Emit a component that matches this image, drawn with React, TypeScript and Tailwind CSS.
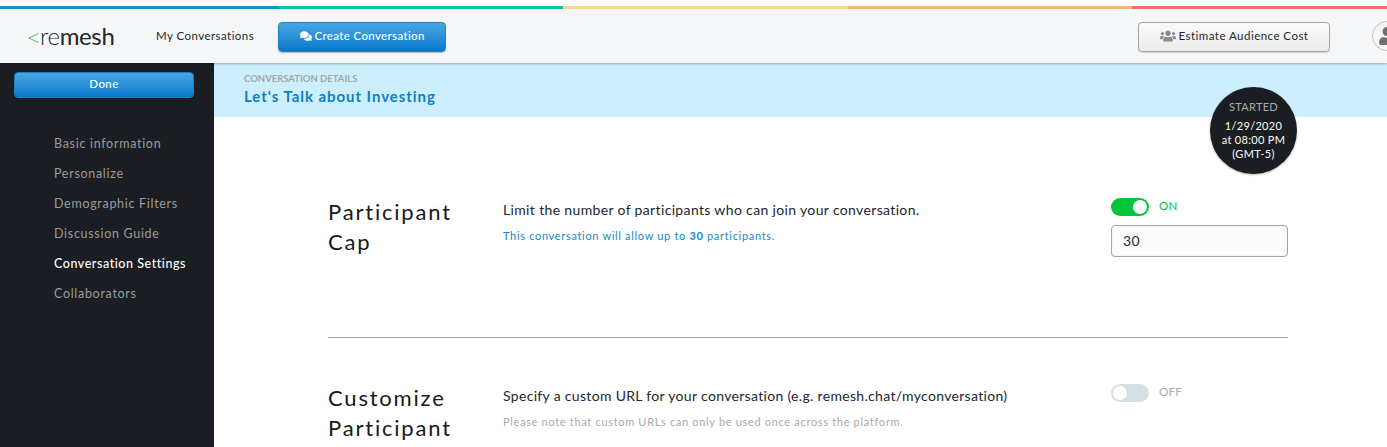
import { FaComments, FaUser, FaUsers } from 'react-icons/fa';

const navItems = [
  'Basic information',
  'Personalize',
  'Demographic Filters',
  'Discussion Guide',
  'Conversation Settings',
  'Collaborators',
];

const blueButton =
  'rounded-[4px] border border-[#2a7fba] bg-gradient-to-b from-[#45a6e3] to-[#0079cc] text-white shadow-[0_1px_1px_rgba(0,0,0,0.25)]';

function Logo() {
  return (
    <div className="flex items-center ml-[28px] w-[128px]">
      <svg width="11" height="12" viewBox="0 0 11 12" className="mt-[3px]" fill="none" stroke="#22b14c" strokeWidth="0.8">
        <path d="M10.5 1.5 .8 6l9.7 4.5" />
      </svg>
      <span className="text-[24px] leading-none tracking-[-0.35px] text-[#22272b] font-light ml-[1px]">
        re<span className="font-normal">mesh</span>
      </span>
    </div>
  );
}

function Header() {
  return (
    <header className="h-[54px] bg-[#f5f6f8] flex items-center shadow-[0_1px_2px_rgba(0,0,0,0.3)] relative z-10 overflow-hidden">
      <Logo />
      <span className="text-[11.5px] tracking-[0.45px] text-[#22272b]">My Conversations</span>
      <button
        type="button"
        className={`${blueButton} ml-[24px] w-[168px] h-[30px] mt-[1px] pb-[2px] flex items-center justify-center gap-[3px] text-[11.5px] tracking-[0.35px] font-medium`}
      >
        <FaComments className="w-[12px] h-[12px]" />
        Create Conversation
      </button>
      <button
        type="button"
        className="ml-auto w-[192px] h-[30px] mt-[1px] pb-[2px] flex items-center justify-center gap-[3px] rounded-[4px] border border-[#a5a5a5] bg-gradient-to-b from-[#fbfbfb] to-[#ebebeb] text-[11.5px] tracking-[0.47px] text-[#22272b] shadow-[0_1px_1px_rgba(0,0,0,0.15)]"
      >
        <FaUsers className="w-[16px] h-[16px] text-[#8a8a8a]" />
        Estimate Audience Cost
      </button>
      <div className="ml-[42px] mr-[-15px] w-[30px] h-[30px] shrink-0 rounded-full border border-[#c4c4c4] bg-[#f5f5f5] flex items-center justify-center overflow-hidden">
        <FaUser className="w-[18px] h-[18px] text-[#6f6f6f]" />
      </div>
    </header>
  );
}

function Sidebar() {
  return (
    <aside className="w-[214px] shrink-0 bg-[#1a1e22] px-[14px] pt-[9px]">
      <button type="button" className={`${blueButton} block w-[180px] h-[26px] pb-[2px] text-[11.5px] tracking-[0.4px] font-medium`}>
        Done
      </button>
      <nav className="mt-[31px] pl-[40px] flex flex-col">
        {navItems.map((item) => (
          <a
            key={item}
            className={`h-[30px] leading-[30px] text-[12.5px] whitespace-nowrap ${
              item === 'Conversation Settings' ? 'text-white font-medium tracking-[0.55px]' : 'text-[#9a9c9e] tracking-[0.7px]'
            }`}
          >
            {item}
          </a>
        ))}
      </nav>
    </aside>
  );
}

function Toggle({ on }: { on: boolean }) {
  return (
    <div className="flex items-center gap-[10px] h-[18px] mt-[1px]">
      <div
        className={`w-[38px] h-[18px] rounded-full flex items-center px-[2px] ${
          on ? 'bg-[#00c43c] justify-end' : 'bg-[#d5dfe3] justify-start'
        }`}
      >
        <div className="w-[14px] h-[14px] rounded-full bg-white" />
      </div>
      <span className={`text-[11.5px] leading-[14px] mb-[2px] tracking-[0.3px] ${on ? 'text-[#00c43c]' : 'text-[#a9a9a9]'}`}>
        {on ? 'ON' : 'OFF'}
      </span>
    </div>
  );
}

export default function App() {
  return (
    <div className="h-[447px] overflow-hidden bg-white font-['Lato',sans-serif] pt-[6px]">
      <div className="flex h-[3px]">
        <div className="w-[279px] bg-[#1296d8]" />
        <div className="w-[284px] bg-[#11c2a5]" />
        <div className="w-[285px] bg-[#f2dd8a]" />
        <div className="w-[284px] bg-[#f8b96f]" />
        <div className="flex-1 bg-[#f4706e]" />
      </div>
      <Header />
      <div className="flex h-[384px]">
        <Sidebar />
        <main className="flex-1 min-w-0">
          <div className="relative h-[54px] bg-[#cdeffd] pl-[30px] pt-[10px]">
            <p className="text-[9.5px] leading-[11px] font-bold tracking-[0px] text-[#a3a8aa]">CONVERSATION DETAILS</p>
            <h1 className="mt-[2px] text-[15px] leading-[20px] font-bold tracking-[0.95px] text-[#0c7fc4]">
              Let's Talk about Investing
            </h1>
            <div className="absolute left-[996px] top-[24px] w-[87px] h-[87px] rounded-full bg-[#1a1e22] shadow-[0_1px_2px_rgba(0,0,0,0.3)] flex flex-col items-center justify-center text-white text-[11px] leading-[14px] tracking-[0.3px]">
              <span className="text-[#a8abad] mb-[5px]">STARTED</span>
              <span>1/29/2020</span>
              <span>at 08:00 PM</span>
              <span>(GMT-5)</span>
            </div>
          </div>
          <div className="ml-[114px] w-[960px]">
            <section className="flex h-[221px] pt-[80px] border-b border-[#a0a0a0]">
              <h2 className="w-[175px] shrink-0 text-[22px] leading-[30px] tracking-[1.8px] text-[#16191c]">
                Participant
                <br />
                Cap
              </h2>
              <div className="flex-1">
                <p className="text-[14px] leading-[18px] mt-[4px] tracking-[0.35px] text-[#22272b]">
                  Limit the number of participants who can join your conversation.
                </p>
                <p className="mt-[10px] text-[11px] leading-[14px] tracking-[0.68px] text-[#1488c9]">
                  This conversation will allow up to <b>30</b> participants.
                </p>
              </div>
              <div className="w-[177px] shrink-0">
                <Toggle on />
                <div className="mt-[9px] h-[32px] rounded-[4px] border border-[#a5a5a5] bg-[#fcfcfc] shadow-[inset_0_0_3px_rgba(0,0,0,0.08)] pl-[11px] leading-[30px] text-[14px] tracking-[0.3px] text-[#22272b]">
                  30
                </div>
              </div>
            </section>
            <section className="flex pt-[45px]">
              <h2 className="w-[175px] shrink-0 text-[22px] leading-[30px] tracking-[1.8px] text-[#16191c]">
                Customize
                <br />
                Participant
              </h2>
              <div className="flex-1">
                <p className="text-[14px] leading-[18px] mt-[4px] tracking-[0.32px] text-[#22272b]">
                  Specify a custom URL for your conversation (e.g. remesh.chat/myconversation)
                </p>
                <p className="mt-[10px] text-[11px] leading-[14px] tracking-[0.68px] text-[#a9a9a9]">
                  Please note that custom URLs can only be used once across the platform.
                </p>
              </div>
              <div className="w-[177px] shrink-0">
                <Toggle on={false} />
              </div>
            </section>
          </div>
        </main>
      </div>
    </div>
  );
}
